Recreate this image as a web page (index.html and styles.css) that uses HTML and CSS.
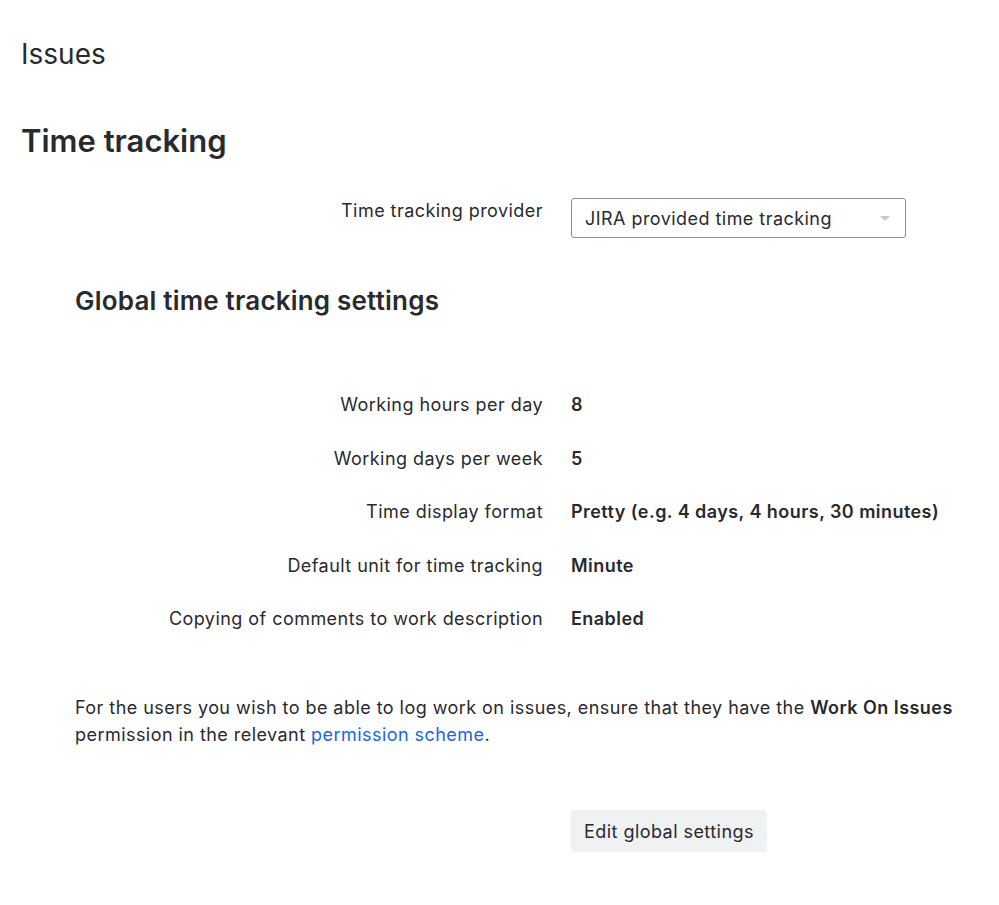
FILE: index.html
```html
<!DOCTYPE html>
<html>
<head>
<meta charset="utf-8">
<link rel="stylesheet" href="styles.css">
</head>
<body>
<div class="page">
  <h1 class="page-title">Issues</h1>
  <h2 class="section-title">Time tracking</h2>
  <div class="field-row provider-row">
    <div class="label">Time tracking provider</div>
    <div class="select">
      <span>JIRA provided time tracking</span>
      <span class="caret"></span>
    </div>
  </div>
  <div class="global">
    <h3 class="sub-title">Global time tracking settings</h3>
    <div class="settings">
      <div class="field-row"><div class="label">Working hours per day</div><div class="value">8</div></div>
      <div class="field-row"><div class="label">Working days per week</div><div class="value">5</div></div>
      <div class="field-row"><div class="label">Time display format</div><div class="value">Pretty (e.g. 4 days, 4 hours, 30 minutes)</div></div>
      <div class="field-row"><div class="label">Default unit for time tracking</div><div class="value">Minute</div></div>
      <div class="field-row"><div class="label">Copying of comments to work description</div><div class="value">Enabled</div></div>
    </div>
    <p class="note">For the users you wish to be able to log work on issues, ensure that they have the <b>Work On Issues</b> permission in the relevant <a href="#">permission scheme</a>.</p>
  </div>
  <div class="field-row actions">
    <div class="label"></div>
    <button class="btn">Edit global settings</button>
  </div>
</div>
</body>
</html>
```
FILE: styles.css
```css
html, body {
  margin: 0;
  padding: 0;
  background: #fff;
}
body {
  font-family: "Inter", "Noto Sans", sans-serif;
  color: #292a2e;
  font-size: 18px;
  letter-spacing: 0.45px;
}
.page {
  padding: 34px 0 0 21px;
}
.page-title {
  margin: 0;
  font-size: 28px;
  font-weight: 400;
  line-height: 40px;
  letter-spacing: 0;
}
.section-title {
  margin: 47px 0 0 0;
  font-size: 31px;
  font-weight: 600;
  line-height: 40px;
  letter-spacing: 0;
}
.field-row {
  display: flex;
  align-items: center;
  gap: 28px;
}
.label {
  width: 522px;
  text-align: right;
  flex: none;
}
.provider-row {
  margin-top: 37px;
  align-items: flex-start;
}
.provider-row .label {
  padding-top: 2px;
}
.select {
  height: 38px;
  border: 1px solid #8c8f97;
  border-radius: 3px;
  display: flex;
  align-items: center;
  justify-content: space-between;
  padding: 0 15px 0 13px;
  box-sizing: content-box;
  width: 305px;
}
.caret {
  width: 0;
  height: 0;
  border-left: 5px solid transparent;
  border-right: 5px solid transparent;
  border-top: 5px solid #c7c9ce;
}
.global {
  padding-left: 54px;
}
.global .label {
  width: 468px;
}
.sub-title {
  margin: 47px 0 0 0;
  font-size: 26px;
  font-weight: 600;
  line-height: 32px;
  letter-spacing: 0.2px;
}
.settings {
  margin-top: 74px;
  display: flex;
  flex-direction: column;
  gap: 26.5px;
}
.settings .field-row {
  line-height: 27px;
}
.value {
  font-weight: 600;
}
.note {
  margin: 62px 0 0 0;
  line-height: 27px;
  width: 900px;
}
.note b {
  font-weight: 600;
}
.note a {
  color: #1868db;
  text-decoration: none;
}
.actions {
  margin-top: 62px;
}
.btn {
  font: inherit;
  letter-spacing: inherit;
  color: #292a2e;
  background: #f0f1f3;
  border: none;
  border-radius: 4px;
  height: 42px;
  padding: 0 13px;
}
```
